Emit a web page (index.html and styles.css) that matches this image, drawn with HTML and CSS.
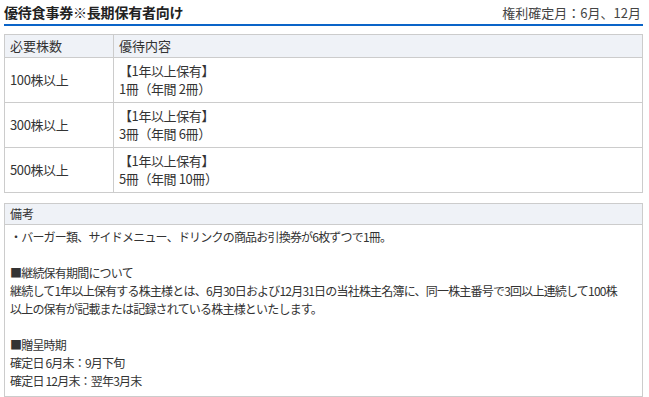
FILE: index.html
```html
<!DOCTYPE html>
<html lang="ja">
<head>
<meta charset="utf-8">
<link rel="stylesheet" href="styles.css">
</head>
<body>
<div class="page">
  <div class="title-bar">
    <h2 class="title">優待食事券※長期保有者向け</h2>
    <span class="right-date">権利確定月：6月、12月</span>
  </div>
  <table class="benefit">
    <thead>
      <tr><th class="col-a">必要株数</th><th>優待内容</th></tr>
    </thead>
    <tbody>
      <tr><td>100株以上</td><td>【1年以上保有】<br>1冊（年間 2冊）</td></tr>
      <tr><td>300株以上</td><td>【1年以上保有】<br>3冊（年間 6冊）</td></tr>
      <tr><td>500株以上</td><td>【1年以上保有】<br>5冊（年間 10冊）</td></tr>
    </tbody>
  </table>
  <div class="notes">
    <div class="notes-head">備考</div>
    <div class="notes-body">
      <p>・バーガー類、サイドメニュー、ドリンクの商品お引換券が6枚ずつで1冊。</p>
      <p class="blank">&nbsp;</p>
      <p>■継続保有期間について</p>
      <p>継続して1年以上保有する株主様とは、6月30日および12月31日の当社株主名簿に、同一株主番号で3回以上連続して100株<br>以上の保有が記載または記録されている株主様といたします。</p>
      <p class="blank">&nbsp;</p>
      <p>■贈呈時期</p>
      <p>確定日 6月末：9月下旬</p>
      <p>確定日 12月末：翌年3月末</p>
    </div>
  </div>
</div>
</body>
</html>
```
FILE: styles.css
```css
html, body {
  margin: 0;
  padding: 0;
  background: #fff;
}
.page {
  padding: 0 6px 0 4px;
  font-family: "Noto Sans CJK JP", "Noto Sans", sans-serif;
  color: #333;
}
.title-bar {
  display: flex;
  justify-content: space-between;
  align-items: center;
  height: 24px;
  border-bottom: 2px solid #0a64c8;
}
.title {
  margin: 0;
  font-size: 14px;
  font-weight: bold;
  color: #222;
  letter-spacing: -0.2px;
}
.right-date {
  font-size: 13px;
  color: #444;
  padding-right: 2px;
}
.benefit {
  width: 100%;
  margin-top: 8px;
  border-collapse: collapse;
  font-size: 13px;
  color: #333;
}
.benefit th, .benefit td {
  border: 1px solid #ccc;
  text-align: left;
  font-weight: normal;
  padding: 0 5px;
}
.benefit th {
  background: #eff2f7;
  height: 22px;
  line-height: 22px;
}
.benefit .col-a {
  width: 98px;
}
.benefit td {
  height: 45px;
  box-sizing: border-box;
  line-height: 18px;
  padding-top: 2px;
  padding-bottom: 2px;
  vertical-align: middle;
  letter-spacing: -0.4px;
}
.notes {
  margin-top: 10px;
  border: 1px solid #ccc;
  font-size: 12px;
  color: #333;
}
.notes-head {
  background: #eff2f7;
  border-bottom: 1px solid #ccc;
  height: 20px;
  line-height: 20px;
  padding-left: 5px;
}
.notes-body {
  padding: 3px 5px 6px;
  line-height: 18px;
  letter-spacing: -0.8px;
}
.notes-body p {
  margin: 0;
}
```
